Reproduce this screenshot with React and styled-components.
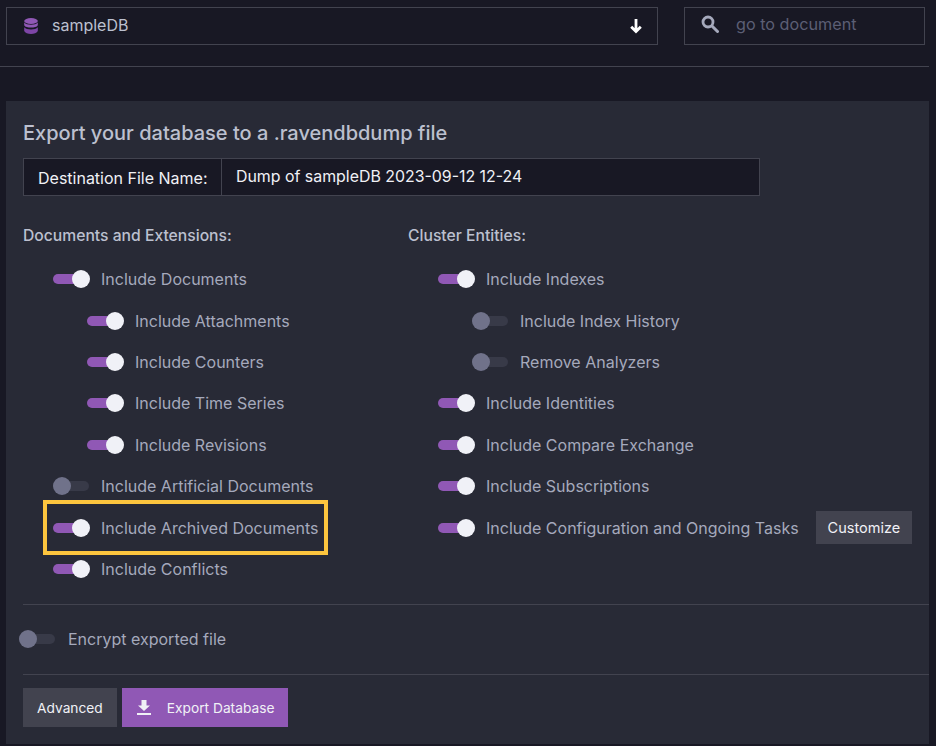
import React from "react";
import styled, { createGlobalStyle } from "styled-components";

const GlobalStyle = createGlobalStyle`
  html, body {
    margin: 0;
    height: 100%;
    background: #181824;
    overflow: hidden;
  }
  body {
    font-family: Inter, "Liberation Sans", sans-serif;
  }
`;

const Page = styled.div`
  width: 936px;
  height: 746px;
  padding-top: 7px;
  box-sizing: border-box;
`;

const TopBar = styled.div`
  display: flex;
  margin-left: 6px;
  gap: 26px;
`;

const SelectBox = styled.div`
  width: 652px;
  height: 38px;
  box-sizing: border-box;
  border: 1px solid #42434f;
  display: flex;
  align-items: center;
  padding: 0 15px 0 17px;
  color: #bcc0cf;
  font-size: 16px;
`;

const SelectName = styled.span`
  flex: 1;
  margin-left: 14px;
  margin-top: -2px;
`;

const SearchBox = styled.div`
  width: 241px;
  height: 38px;
  box-sizing: border-box;
  border: 1px solid #42434f;
  display: flex;
  align-items: center;
  padding: 0 0 5px 16px;
  gap: 17px;
  color: #5c5f75;
  font-size: 16.2px;
`;

const Divider = styled.div`
  width: 929px;
  height: 1px;
  margin-top: 21px;
  background: #42434f;
`;

const Panel = styled.div`
  width: 923px;
  height: 643px;
  margin: 34px 0 0 6px;
  background: #282a36;
  box-sizing: border-box;
  padding-top: 20px;
`;

const Title = styled.h1`
  margin: 0 0 0 17px;
  height: 25px;
  line-height: 25px;
  font-size: 20px;
  font-weight: 500;
  color: #bcc0cf;
`;

const FileGroup = styled.div`
  display: flex;
  width: 737px;
  height: 38px;
  margin: 12px 0 0 17px;
  box-sizing: border-box;
  border: 1px solid #42434f;
  background: #181824;
  color: #f0f1f6;
  font-size: 16px;
`;

const FileLabel = styled.div`
  width: 198px;
  padding-left: 14px;
  box-sizing: border-box;
  border-right: 1px solid #42434f;
  line-height: 38px;
`;

const FileValue = styled.div`
  padding-left: 14px;
  line-height: 36px;
  font-size: 15.9px;
`;

const Columns = styled.div`
  display: flex;
  margin: 28px 0 0 17px;
  height: 380px;
`;

const Column = styled.div`
  width: ${(p) => p.$width}px;
`;

const ColumnTitle = styled.div`
  height: 24px;
  line-height: 24px;
  margin-bottom: 10.6px;
  color: #bcc0cf;
  font-size: 15.7px;
  font-weight: 500;
`;

const Row = styled.div`
  display: flex;
  align-items: center;
  height: 41.4px;
  padding-left: ${(p) => (p.$nested ? 64 : 30)}px;
  color: #a5a9bc;
  font-size: 16px;
  position: relative;
`;

const ToggleTrack = styled.span`
  position: relative;
  flex: none;
  width: 36px;
  height: 10px;
  margin-right: 12px;
  border-radius: 5px;
  background: ${(p) => (p.$on ? "#9058b5" : "#383a48")};
`;

const ToggleKnob = styled.span`
  position: absolute;
  top: -4px;
  left: ${(p) => (p.$on ? 19 : 0)}px;
  width: 18px;
  height: 18px;
  border-radius: 50%;
  background: ${(p) => (p.$on ? "#f0f1f7" : "#70728a")};
`;

const Highlight = styled.div`
  position: absolute;
  left: 20px;
  top: -7px;
  width: 285px;
  height: 55px;
  box-sizing: border-box;
  border: 4px solid #fdc53e;
  pointer-events: none;
`;

const Button = styled.button`
  display: inline-flex;
  align-items: center;
  height: 39px;
  padding: 0 14px;
  border: 0;
  background: ${(p) => (p.$primary ? "#9058b5" : "#42434f")};
  color: #f0f1f6;
  font-family: inherit;
  font-size: 13.75px;
`;

const CustomizeButton = styled(Button)`
  height: 33px;
  padding: 0 12px;
  margin-left: 17px;
  font-size: 14.5px;
`;

const Rule = styled.div`
  height: 1px;
  margin-left: 17px;
  background: #42434f;
`;

const EncryptRow = styled(Row)`
  height: 69px;
  padding: 0 0 2px 13px;
  box-sizing: border-box;
  gap: 1px;
`;

const Actions = styled.div`
  display: flex;
  gap: 5px;
  margin: 13px 0 0 17px;
`;

const ExportIcon = styled.svg`
  margin: 0 16px 0 1px;
`;

const Toggle = ({ on }) => (
  <ToggleTrack $on={on}>
    <ToggleKnob $on={on} />
  </ToggleTrack>
);

const DatabaseIcon = () => (
  <svg width="14" height="16" viewBox="0 0 14 16">
    <ellipse cx="7" cy="3" rx="6.8" ry="3" fill="#9058b5" />
    <path d="M.2 4.6C1.5 6.3 4 6.8 7 6.8s5.5-.5 6.8-2.2v2.6C13 9 10 9.6 7 9.6S1 9 .2 7.2z" fill="#9058b5" />
    <path d="M.2 9.2C1.5 10.9 4 11.4 7 11.4s5.5-.5 6.8-2.2v3.8C13 15 10 16 7 16s-6-1-6.800-3z" fill="#7d45a6" />
  </svg>
);

const ArrowDownIcon = () => (
  <svg width="12" height="16" viewBox="0 0 12 16">
    <path d="M6 1v13M1.200 8.800 6 13.600l4.800-4.800" fill="none" stroke="#fff" strokeWidth="2.800" />
  </svg>
);

const SearchIcon = () => (
  <svg width="18" height="18" viewBox="0 0 18 18">
    <circle cx="7" cy="7" r="5" fill="none" stroke="#a5a9bc" strokeWidth="2.800" />
    <path d="M11 11l5.500 5.500" stroke="#a5a9bc" strokeWidth="3" strokeLinecap="round" />
  </svg>
);

const leftRows = [
  { label: "Include Documents", on: true },
  { label: "Include Attachments", on: true, nested: true },
  { label: "Include Counters", on: true, nested: true },
  { label: "Include Time Series", on: true, nested: true },
  { label: "Include Revisions", on: true, nested: true },
  { label: "Include Artificial Documents", on: false },
  { label: "Include Archived Documents", on: true, marked: true },
  { label: "Include Conflicts", on: true },
];

const rightRows = [
  { label: "Include Indexes", on: true },
  { label: "Include Index History", on: false, nested: true },
  { label: "Remove Analyzers", on: false, nested: true },
  { label: "Include Identities", on: true },
  { label: "Include Compare Exchange", on: true },
  { label: "Include Subscriptions", on: true },
  { label: "Include Configuration and Ongoing Tasks", on: true, customize: true },
];

const renderRow = (row) => (
  <Row key={row.label} $nested={row.nested}>
    <Toggle on={row.on} />
    {row.label}
    {row.marked && <Highlight />}
    {row.customize && <CustomizeButton>Customize</CustomizeButton>}
  </Row>
);

export default function App() {
  return (
    <Page>
      <GlobalStyle />
      <TopBar>
        <SelectBox>
          <DatabaseIcon />
          <SelectName>sampleDB</SelectName>
          <ArrowDownIcon />
        </SelectBox>
        <SearchBox>
          <SearchIcon />
          go to document
        </SearchBox>
      </TopBar>
      <Divider />
      <Panel>
        <Title>Export your database to a .ravendbdump file</Title>
        <FileGroup>
          <FileLabel>Destination File Name:</FileLabel>
          <FileValue>Dump of sampleDB 2023-09-12 12-24</FileValue>
        </FileGroup>
        <Columns>
          <Column $width={385}>
            <ColumnTitle>Documents and Extensions:</ColumnTitle>
            {leftRows.map(renderRow)}
          </Column>
          <Column $width={510}>
            <ColumnTitle>Cluster Entities:</ColumnTitle>
            {rightRows.map(renderRow)}
          </Column>
        </Columns>
        <Rule />
        <EncryptRow>
          <Toggle on={false} />
          Encrypt exported file
        </EncryptRow>
        <Rule />
        <Actions>
          <Button>Advanced</Button>
          <Button $primary>
            <ExportIcon width="14" height="15" viewBox="0 0 14 15">
              <path d="M4.500 0h5v5.500H13L7 11 1 5.500h3.500zM0 13h14v2H0z" fill="#f0f1f6" />
            </ExportIcon>
            Export Database
          </Button>
        </Actions>
      </Panel>
    </Page>
  );
}
